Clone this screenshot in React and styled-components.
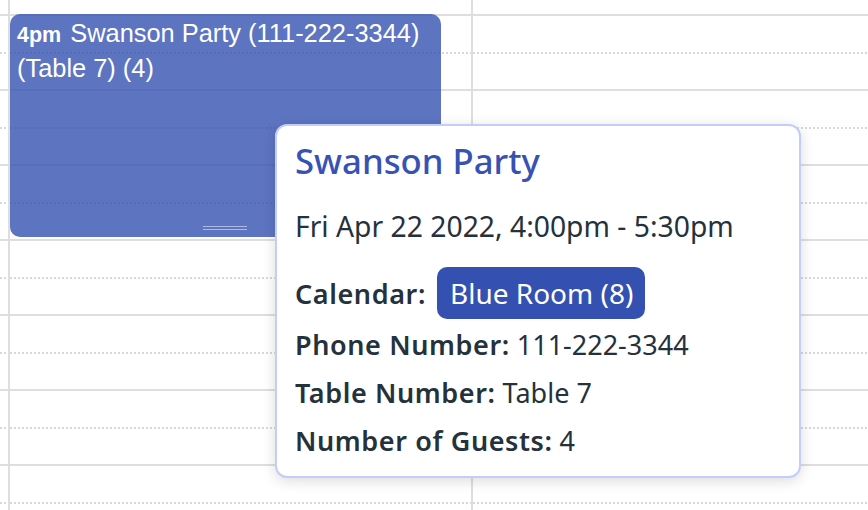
import React from "react";
import styled, { createGlobalStyle } from "styled-components";

const GlobalStyle = createGlobalStyle`
  html, body {
    margin: 0;
    padding: 0;
    background: #ffffff;
    overflow: hidden;
  }
`;

const Calendar = styled.div`
  position: relative;
  display: flex;
  width: 868px;
  height: 510px;
  overflow: hidden;
`;

const Column = styled.div`
  position: relative;
  flex: ${(props) => (props.$width ? "none" : "1")};
  width: ${(props) => props.$width || "auto"};
  border-left: ${(props) => (props.$ruled ? "2px solid #dedede" : "none")};
`;

const TopGap = styled.div`
  height: 14px;
`;

const Slot = styled.div`
  box-sizing: border-box;
  height: 75px;
  border-top: 2px solid #dedede;
  background-image: repeating-linear-gradient(
    to right,
    #d8d8d8 0 2px,
    transparent 2px 4px
  );
  background-size: 100% 2px;
  background-position: 0 36px;
  background-repeat: no-repeat;
`;

const Event = styled.div`
  position: absolute;
  top: 14px;
  left: 0;
  box-sizing: border-box;
  width: 431px;
  height: 223px;
  padding: 3px 7px;
  border-radius: 10px;
  background: rgba(52, 81, 178, 0.8);
  color: #ffffff;
  font-family: "Liberation Sans", Arial, sans-serif;
  font-size: 25.4px;
  line-height: 33px;
`;

const EventTime = styled.span`
  font-size: 21.5px;
  font-weight: 700;
  margin-right: 2px;
`;

const Resizer = styled.div`
  position: absolute;
  left: 193px;
  bottom: 7px;
  width: 44px;
  height: 2px;
  border-top: 1px solid rgba(255, 255, 255, 0.5);
  border-bottom: 1px solid rgba(255, 255, 255, 0.5);
`;

const Popover = styled.div`
  position: absolute;
  left: 275px;
  top: 124px;
  box-sizing: border-box;
  width: 526px;
  height: 354px;
  padding: 14px 19px 11px 18px;
  display: flex;
  flex-direction: column;
  background: #ffffff;
  border: 2px solid #c3cdfb;
  border-radius: 12px;
  box-shadow: 0 3px 14px rgba(0, 0, 0, 0.14);
  font-family: "Noto Sans", "Open Sans", sans-serif;
  color: #25313b;
`;

const Title = styled.div`
  font-size: 34.7px;
  font-weight: 500;
  line-height: 42px;
  color: #3852b4;
`;

const When = styled.div`
  margin-top: 25px;
  font-size: 28.3px;
  line-height: 38px;
`;

const Row = styled.div`
  display: flex;
  align-items: baseline;
  gap: 7px;
  font-size: 27px;
  line-height: 48px;
  margin-top: ${(props) => props.$top || "0"};
  margin-bottom: ${(props) => props.$bottom || "0"};
`;

const Label = styled.span`
  font-weight: 650;
  letter-spacing: 0.6px;
`;

const Badge = styled.span`
  padding: 7px 12px 7px 13px;
  margin-left: 4px;
  border-radius: 10px;
  background: #3451b2;
  color: #ffffff;
  font-size: 28px;
  line-height: 38px;
`;

const slots = [0, 1, 2, 3, 4, 5, 6];

const Slots = () => (
  <>
    <TopGap />
    {slots.map((i) => (
      <Slot key={i} />
    ))}
  </>
);

const App = () => {
  return (
    <>
      <GlobalStyle />
      <Calendar>
        <Column $width="8px">
          <Slots />
        </Column>
        <Column $width="461px" $ruled>
          <Slots />
          <Event>
            <EventTime>4pm</EventTime> Swanson Party (111-222-3344) (Table 7) (4)
            <Resizer />
          </Event>
        </Column>
        <Column $ruled>
          <Slots />
        </Column>
        <Popover>
          <Title>Swanson Party</Title>
          <When>Fri Apr 22 2022, 4:00pm - 5:30pm</When>
          <Row $top="22px" $bottom="2px">
            <Label>Calendar:</Label>
            <Badge>Blue Room (8)</Badge>
          </Row>
          <Row>
            <Label>Phone Number:</Label>
            <span>111-222-3344</span>
          </Row>
          <Row>
            <Label>Table Number:</Label>
            <span>Table 7</span>
          </Row>
          <Row>
            <Label>Number of Guests:</Label>
            <span>4</span>
          </Row>
        </Popover>
      </Calendar>
    </>
  );
};

export default App;
